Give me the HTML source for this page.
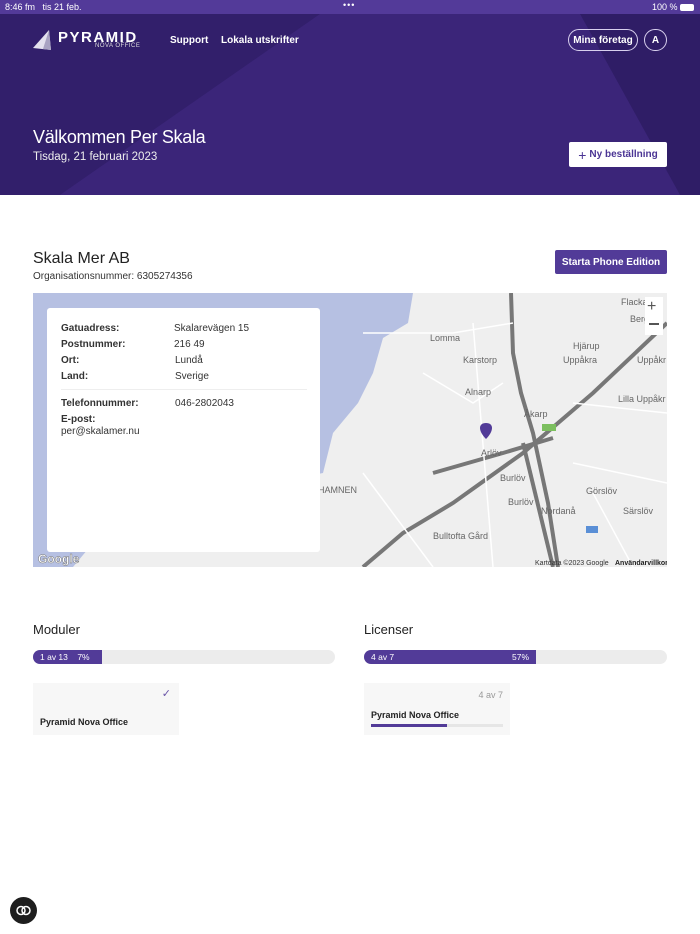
<!DOCTYPE html>
<html><head><meta charset="utf-8"><style>
*{margin:0;padding:0;box-sizing:border-box}
body{width:700px;height:934px;background:#fff;font-family:"Liberation Sans",sans-serif;position:relative;overflow:hidden;color:#222}
.abs{position:absolute}
.sb{top:0;left:0;width:700px;height:14px;background:#533a99;color:#fff;font-size:9px}
.hdr{top:14px;left:0;width:700px;height:181px;background:#3a2577;overflow:hidden}
.pill{border:1px solid #d8d0ee;border-radius:14px;color:#fff;font-size:10px;font-weight:bold;display:flex;align-items:center;justify-content:center}
.lbl{font-size:10px;font-weight:bold;color:#333}
.val{font-size:10px;color:#333}
.cen{display:flex;align-items:center;justify-content:center}
</style></head><body>
<div class="abs sb"><span class="abs" style="left:5px;top:2px">8:46 fm&nbsp;&nbsp;&nbsp;tis 21 feb.</span><span class="abs" style="left:343px;top:0px;letter-spacing:1px">•••</span><span class="abs" style="left:652px;top:2px">100 %</span><span class="abs" style="left:680px;top:4px;width:14px;height:7px;background:#fff;border-radius:2px"></span></div>
<div class="abs hdr">
<svg class="abs" style="left:0;top:0" width="700" height="181"><polygon points="0,0 320,0 60,181 0,181" fill="#321f6b"/><polygon points="580,0 700,0 700,181 680,181" fill="#2f1d66"/><polygon points="320,0 580,0 680,181 60,181" fill="#3b2579"/></svg>
<svg class="abs" style="left:33px;top:16px" width="22" height="20"><polygon points="16,0 0,18 18,20" fill="#e4e1ee"/><polygon points="16,0 10,19 18,20" fill="#a9a3c2"/></svg>
<div class="abs" style="left:58px;top:15px;color:#fff;font-weight:900;font-size:15px;letter-spacing:1.5px">PYRAMID</div>
<div class="abs" style="left:95px;top:29px;color:#ddd;font-size:6px;letter-spacing:.5px">NOVA OFFICE</div>
<div class="abs" style="left:170px;top:21px;color:#fff;font-size:10px;font-weight:bold">Support</div>
<div class="abs" style="left:221px;top:21px;color:#fff;font-size:10px;font-weight:bold">Lokala utskrifter</div>
<div class="abs pill" style="left:568px;top:15px;width:70px;height:22px">Mina företag</div>
<div class="abs pill" style="left:644px;top:15px;width:23px;height:22px">A</div>
<div class="abs" style="left:33px;top:113px;color:#fff;font-size:18px;letter-spacing:-0.3px">Välkommen Per Skala</div>
<div class="abs" style="left:33px;top:137px;color:#eee;font-size:11.5px">Tisdag, 21 februari 2023</div>
<div class="abs cen" style="left:569px;top:128px;width:98px;height:25px;background:#fff;border-radius:2px;color:#4b3594;font-size:10px;font-weight:bold"><span style="font-weight:normal;font-size:14px;margin-right:3px">+</span>Ny beställning</div>
</div>
<div class="abs" style="left:33px;top:250px;font-size:16px;color:#222">Skala Mer AB</div>
<div class="abs" style="left:33px;top:271px;font-size:10px;color:#333">Organisationsnummer: 6305274356</div>
<div class="abs cen" style="left:555px;top:250px;width:112px;height:24px;background:#523b98;color:#fff;font-size:10px;font-weight:bold;border-radius:2px">Starta Phone Edition</div>
<div class="abs" style="left:33px;top:293px;width:634px;height:274px;background:#efefef;overflow:hidden">
<svg width="634" height="274" style="position:absolute;left:0;top:0">
<path d="M0,0 L380,0 L375,30 L350,45 L340,80 L325,110 L300,140 L290,180 L240,190 L200,215 L150,225 L110,240 L60,250 L40,274 L0,274Z" fill="#b6c0e2"/>
<g stroke="#777" stroke-width="4" fill="none"><path d="M478,0 L480,60 L488,100 L500,140 L515,210 L525,274"/><path d="M634,30 L560,100 L490,160 L420,210 L370,240 L330,274"/><path d="M400,180 L470,160 L520,145"/><path d="M490,150 L520,274"/></g>
<g stroke="#fff" stroke-width="1.5" fill="none"><path d="M330,40 L420,40 L480,30"/><path d="M390,80 L440,110 L470,90"/><path d="M540,110 L634,120"/><path d="M540,170 L634,190"/><path d="M560,200 L600,274"/><path d="M330,180 L400,274"/><path d="M440,30 L460,274"/></g>
<g fill="#666" font-size="9" font-family="Liberation Sans"><text x="397" y="48">Lomma</text><text x="430" y="70">Karstorp</text><text x="432" y="102">Alnarp</text><text x="491" y="124">Åkarp</text><text x="448" y="163">Arlöv</text><text x="467" y="188">Burlöv</text><text x="475" y="212">Burlöv</text><text x="508" y="221">Nordanå</text><text x="553" y="201">Görslöv</text><text x="590" y="221">Särslöv</text><text x="540" y="56">Hjärup</text><text x="530" y="70">Uppåkra</text><text x="585" y="109">Lilla Uppåkr</text><text x="604" y="70">Uppåkr</text><text x="588" y="12">Flacka</text><text x="597" y="29">Berg</text><text x="285" y="200">HAMNEN</text><text x="400" y="246">Bulltofta Gård</text></g>
<rect x="509" y="131" width="14" height="7" fill="#7cbf5f"/><rect x="553" y="233" width="12" height="7" fill="#5a8fd6"/>
<path d="M453,146 C445,138 445,130 453,130 C461,130 461,138 453,146Z" fill="#523b98"/>
<rect x="612" y="4" width="18" height="38" fill="#fff"/><text x="614" y="18" font-size="16" fill="#555">+</text><rect x="616" y="30" width="10" height="2" fill="#555"/>
<text x="502" y="272" font-size="7" fill="#333">Kartdata ©2023 Google</text><text x="582" y="272" font-size="7" fill="#222" font-weight="bold">Användarvillkor</text>
<text x="5" y="270" font-size="12" fill="#fff" stroke="#777" stroke-width=".5" font-weight="bold">Google</text>
</svg>
<div class="abs" style="left:14px;top:15px;width:273px;height:244px;background:#fff;border-radius:3px">
<div class="abs lbl" style="left:14px;top:15px">Gatuadress:</div><div class="abs val" style="left:127px;top:15px">Skalarevägen 15</div>
<div class="abs lbl" style="left:14px;top:31px">Postnummer:</div><div class="abs val" style="left:127px;top:31px">216 49</div>
<div class="abs lbl" style="left:14px;top:47px">Ort:</div><div class="abs val" style="left:128px;top:47px">Lundå</div>
<div class="abs lbl" style="left:14px;top:63px">Land:</div><div class="abs val" style="left:128px;top:63px">Sverige</div>
<div class="abs" style="left:14px;top:81px;width:246px;height:1px;background:#eee"></div>
<div class="abs lbl" style="left:14px;top:90px">Telefonnummer:</div><div class="abs val" style="left:128px;top:90px">046-2802043</div>
<div class="abs lbl" style="left:14px;top:106px">E-post:</div><div class="abs val" style="left:14px;top:118px">per@skalamer.nu</div>
</div></div>
<div class="abs" style="left:33px;top:622px;font-size:13px">Moduler</div>
<div class="abs" style="left:33px;top:650px;width:302px;height:14px;background:#ececec;border-radius:7px;overflow:hidden"><div style="width:69px;height:14px;background:#523b98;color:#fff;font-size:8.5px;line-height:14px;padding-left:7px">1 av 13&nbsp;&nbsp;&nbsp;&nbsp;7%</div></div>
<div class="abs" style="left:33px;top:683px;width:146px;height:52px;background:#f7f7f7"><span class="abs" style="right:8px;top:4px;color:#6a55a8;font-size:11px">✓</span><span class="abs" style="left:7px;top:34px;font-size:9px;font-weight:bold">Pyramid Nova Office</span></div>
<div class="abs" style="left:364px;top:622px;font-size:13px">Licenser</div>
<div class="abs" style="left:364px;top:650px;width:303px;height:14px;background:#ececec;border-radius:7px;overflow:hidden"><div style="width:172px;height:14px;background:#523b98;color:#fff;font-size:8.5px;line-height:14px;padding-left:7px;position:relative">4 av 7<span style="position:absolute;right:7px">57%</span></div></div>
<div class="abs" style="left:364px;top:683px;width:146px;height:52px;background:#f7f7f7"><span class="abs" style="right:7px;top:7px;color:#999;font-size:9px">4 av 7</span><span class="abs" style="left:7px;top:27px;font-size:9px;font-weight:bold">Pyramid Nova Office</span><div class="abs" style="left:7px;top:41px;width:132px;height:3px;background:#e6e6e6"><div style="width:76px;height:3px;background:#523b98"></div></div></div>
<div class="abs" style="left:10px;top:897px;width:27px;height:27px;border-radius:50%;background:#1e1e1e"><svg width="27" height="27"><circle cx="11" cy="13.5" r="4" fill="none" stroke="#fff" stroke-width="1.5"/><circle cx="16" cy="13.5" r="4" fill="none" stroke="#fff" stroke-width="1.5"/></svg></div>
</body></html>
